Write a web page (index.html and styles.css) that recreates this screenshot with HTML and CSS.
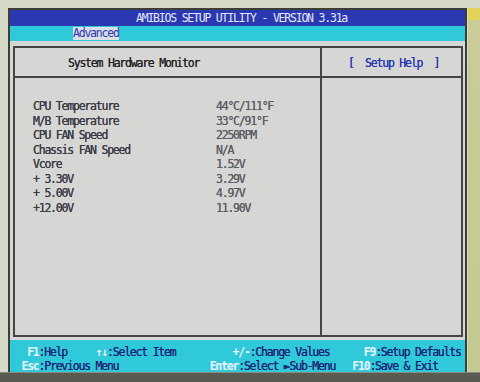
FILE: index.html
```html
<!DOCTYPE html>
<html lang="en">
<head>
  <meta charset="UTF-8" />
  <title>AMIBIOS Setup Utility</title>
  <link rel="stylesheet" href="styles.css">
</head>
<body>
  <div class="monitor">
    <div class="screen">
      <div class="title-bar">AMIBIOS SETUP UTILITY - VERSION 3.31a</div>
      <div class="menu-bar">
        <span class="menu-item active">Advanced</span>
      </div>

      <div class="panel-area">
        <div class="panel">
          <div class="panel-main">
            <div class="panel-header">System Hardware Monitor</div>
            <div class="sensor-list">
              <div class="sensor"><span class="sensor-label">CPU Temperature</span><span class="sensor-value">44°C/111°F</span></div>
              <div class="sensor"><span class="sensor-label">M/B Temperature</span><span class="sensor-value">33°C/91°F</span></div>
              <div class="sensor"><span class="sensor-label">CPU FAN Speed</span><span class="sensor-value">2250RPM</span></div>
              <div class="sensor"><span class="sensor-label">Chassis FAN Speed</span><span class="sensor-value">N/A</span></div>
              <div class="sensor"><span class="sensor-label">Vcore</span><span class="sensor-value">1.52V</span></div>
              <div class="sensor"><span class="sensor-label">+ 3.30V</span><span class="sensor-value">3.29V</span></div>
              <div class="sensor"><span class="sensor-label">+ 5.00V</span><span class="sensor-value">4.97V</span></div>
              <div class="sensor"><span class="sensor-label">+12.00V</span><span class="sensor-value">11.90V</span></div>
            </div>
          </div>
          <div class="panel-help">
            <div class="panel-header help-title">[  Setup Help  ]</div>
          </div>
        </div>
      </div>

      <div class="key-bar">
        <div class="key-row">   <b>F1</b>:Help     <b>↑↓</b>:Select Item          <b>+/-</b>:Change Values      <b>F9</b>:Setup Defaults</div>
        <div class="key-row">  <b>Esc</b>:Previous Menu                <b>Enter</b>:Select ►Sub-Menu   <b>F10</b>:Save &amp; Exit</div>
      </div>
    </div>
    <div class="sticker"></div>
  </div>
  <div class="bezel-bottom"></div>
</body>
</html>
```

FILE: styles.css
```css
* { margin: 0; padding: 0; box-sizing: border-box; }

:root {
  --bezel: #d5d9c5;
  --edge: #3d3e38;
  --bios-blue: #2a38b2;
  --bios-cyan: #2fc9d9;
  --bios-grey: #d6d6d5;
  --line: #454548;
  --navy: #1d2778;
}

body {
  width: 480px;
  height: 382px;
  overflow: hidden;
  background: var(--bezel);
  font-family: "DejaVu Sans Mono", monospace;
  font-size: 11.5px;
  letter-spacing: -1.22px;
  line-height: 14.5px;
}

.monitor {
  display: flex;
  height: 372px;
  padding: 8px 0 0 8px;
}

.screen {
  width: 459px;
  height: 364px;
  display: flex;
  flex-direction: column;
  border: 2px solid var(--edge);
  border-bottom: none;
  background: var(--bios-grey);
}

.title-bar {
  height: 16px;
  line-height: 16px;
  background: var(--bios-blue);
  color: #e4e8f8;
  padding-left: 126px;
  white-space: pre;
}

.menu-bar {
  height: 15px;
  background: var(--bios-cyan);
  padding-left: 63px;
  display: flex;
  align-items: center;
}

.menu-item {
  color: var(--bios-blue);
  line-height: 13px;
}

.menu-item.active {
  background: #dcdfe6;
}

.panel-area {
  flex: 1;
  padding: 5px 2px 3px 3px;
}

.panel {
  height: 100%;
  display: flex;
  border: 2px solid var(--line);
}

.panel-main {
  width: 307px;
  border-right: 2px solid var(--line);
}

.panel-help {
  flex: 1;
}

.panel-header {
  height: 30px;
  line-height: 30px;
  border-bottom: 2px solid var(--line);
  color: #262628;
  padding-left: 53px;
  white-space: pre;
  text-shadow: 0 0 0.4px #262628;
}

.help-title {
  color: var(--bios-blue);
  padding-left: 26px;
  text-shadow: 0 0 0.4px var(--bios-blue);
}

.sensor-list {
  padding: 21px 0 0 18px;
}

.sensor {
  display: flex;
  height: 14.5px;
}

.sensor-label {
  width: 183px;
  color: #3a3b46;
  white-space: pre;
  text-shadow: 0 0 0.4px #3a3b46;
}

.sensor-value {
  color: #5d5d64;
  text-shadow: 0 0 0.4px #5d5d64;
}

.key-bar {
  height: 32px;
  background: var(--bios-cyan);
  padding-top: 5px;
}

.key-row {
  white-space: pre;
  color: var(--navy);
  height: 14px;
  line-height: 14px;
  text-shadow: 0 0 0.4px var(--navy);
}

.key-row b {
  font-weight: bold;
  color: #e8f4fb;
  text-shadow: none;
}

.sticker {
  flex: 1;
  margin-left: 1px;
  background: linear-gradient(180deg, #e2d45a 0, #e2d45a 12px, #c9cc98 12px, #c4c892 100%);
}

.bezel-bottom {
  height: 10px;
  background: #5a5a50;
  border-top: 1px solid #8a8a7c;
}
```
